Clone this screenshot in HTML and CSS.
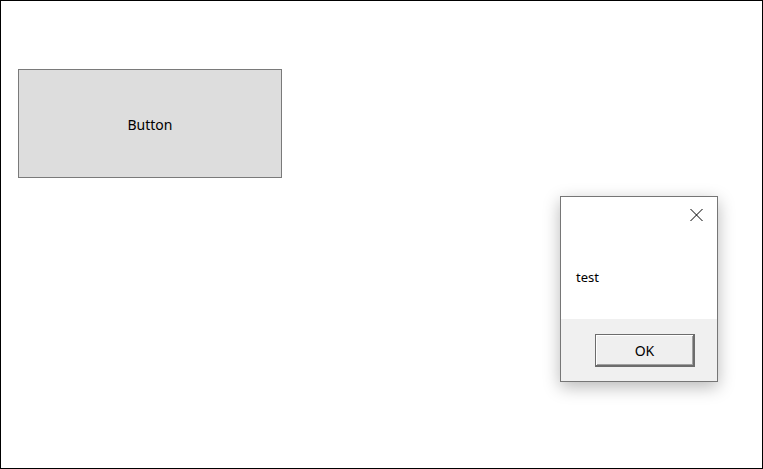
FILE: index.html
```html
<!DOCTYPE html>
<html lang="en">
<head>
    <meta charset="UTF-8">
    <meta name="viewport" content="width=device-width, initial-scale=1.0">
    <title>Form</title>
    <link rel="stylesheet" href="styles.css">
</head>
<body>
    <div class="window">
        <button class="main-button" type="button">Button</button>

        <div class="message-box" role="dialog">
            <div class="message-header">
                <button class="close-button" type="button" aria-label="Close">
                    <svg width="13" height="12" viewBox="0 0 13 12">
                        <path d="M0.5 0 L12.5 12 M12.5 0 L0.5 12" stroke="#000" stroke-width="1" fill="none"/>
                    </svg>
                </button>
            </div>
            <div class="message-body">test</div>
            <div class="message-footer">
                <button class="ok-button" type="button">OK</button>
            </div>
        </div>
    </div>
</body>
</html>
```

FILE: styles.css
```css
* {
    margin: 0;
    padding: 0;
    box-sizing: border-box;
}

body {
    font-family: 'Noto Sans', 'Open Sans', sans-serif;
    background: #fff;
    color: #000;
}

.window {
    position: relative;
    width: 763px;
    height: 469px;
    border: 1px solid #000;
    background: #fff;
    padding: 68px 0 0 17px;
}

.main-button {
    display: flex;
    align-items: center;
    justify-content: center;
    width: 264px;
    height: 109px;
    padding-top: 2px;
    background: #dddddd;
    border: 1px solid #7a7a7a;
    font-family: inherit;
    font-size: 14px;
    color: #000;
}

/* message box floats over the form */
.message-box {
    position: absolute;
    left: 559px;
    top: 195px;
    width: 158px;
    height: 186px;
    border: 1px solid #767676;
    background: #fff;
    display: flex;
    flex-direction: column;
    box-shadow: 0 5px 16px rgba(0, 0, 0, 0.28);
}

.message-header {
    display: flex;
    justify-content: flex-end;
    padding: 12px 14px 0 0;
}

.close-button {
    display: block;
    width: 13px;
    height: 12px;
    border: none;
    background: none;
}

.close-button svg {
    display: block;
}

.message-body {
    flex: 1;
    padding: 47px 0 0 15px;
    font-size: 13px;
    line-height: 18px;
}

.message-footer {
    height: 62px;
    background: #f0f0f0;
    display: flex;
    justify-content: flex-end;
    align-items: flex-start;
    padding: 15px 22px 0 0;
}

.ok-button {
    width: 100px;
    height: 33px;
    background: #efefef;
    border: 1px solid #6c6c6c;
    border-right-width: 2px;
    border-bottom-width: 2px;
    box-shadow: inset 1px 1px 0 #fff, inset -1px -1px 0 #a0a0a0;
    font-family: inherit;
    font-size: 14px;
    color: #000;
}
```
